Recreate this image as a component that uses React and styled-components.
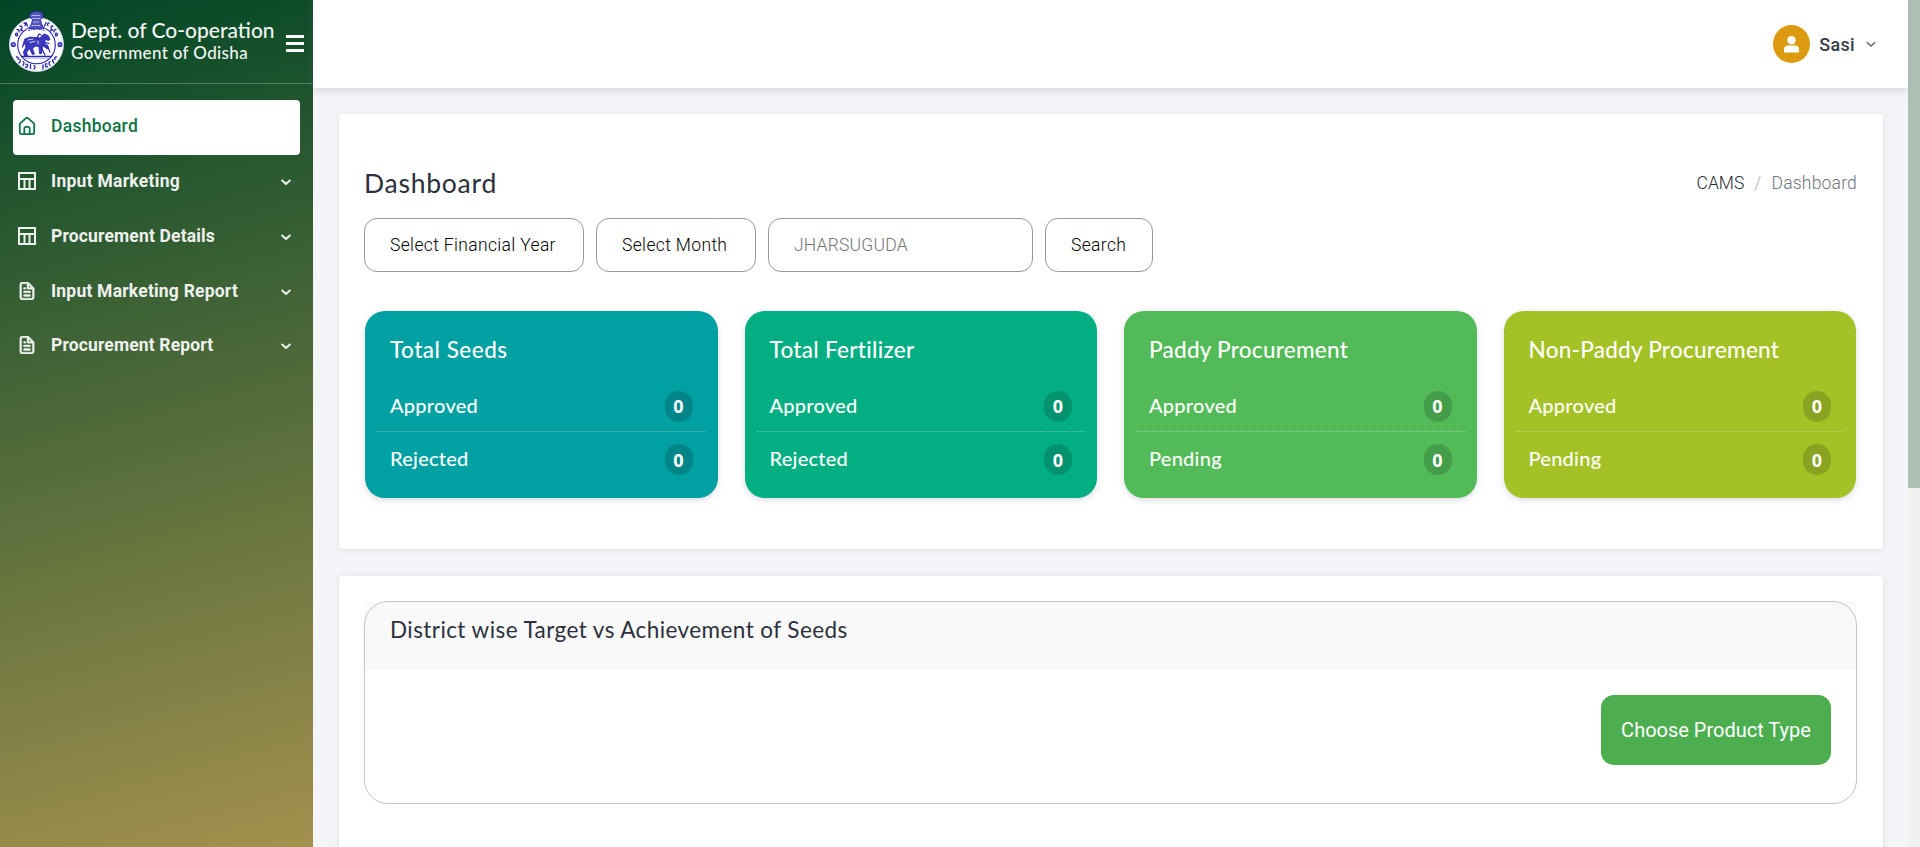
import React from "react";
import styled, { createGlobalStyle } from "styled-components";

const round = '"Lato", "Open Sans", sans-serif';
const plex = '"Roboto", "Noto Sans", sans-serif';

const Global = createGlobalStyle`
  * { box-sizing: border-box; }
  html, body { margin: 0; height: 100%; overflow: hidden; }
  body { background: #f4f5f8; font-family: ${plex}; }
  h1, h2, h3, p { margin: 0; font-weight: 400; }
  button, input { font: inherit; }
`;

const Page = styled.div`
  display: grid;
  grid-template-columns: 313px 1fr 12px;
  height: 847px;
  overflow: hidden;
`;

const Sidebar = styled.aside`
  background: linear-gradient(165deg, #004626 0%, #a9934f 100%);
  color: #eef2f7;
`;

const Brand = styled.header`
  display: flex;
  height: 84px;
  padding: 11px 9px 0;
  border-bottom: 1px solid rgba(255, 255, 255, 0.25);
`;

const BrandText = styled.div`
  flex: 1;
  margin-left: 7px;
  padding-top: 6px;
  font-family: ${round};
  font-weight: 500;
  color: #f2f6f3;
  white-space: nowrap;
`;

const BrandTitle = styled.div`
  font-size: 21px;
  line-height: 26px;
`;

const BrandSub = styled.div`
  font-size: 17px;
  line-height: 20px;
  letter-spacing: 0.35px;
`;

const Burger = styled.button`
  display: flex;
  flex-direction: column;
  gap: 4px;
  width: 18px;
  height: 17px;
  margin-top: 24px;
  padding: 0;
  border: 0;
  background: none;
  i { height: 3px; background: #fff; }
`;

const Nav = styled.nav`
  padding: 16px 13px 0;
`;

const NavItem = styled.a`
  display: flex;
  align-items: center;
  height: 54.75px;
  padding: 0 9px 2px 5px;
  border-radius: 4px;
  font-size: 17.5px;
  font-weight: ${(p) => (p.$active ? 500 : 700)};
  color: ${(p) => (p.$active ? "#0f7345" : "#eef1ee")};
  background: ${(p) => (p.$active ? "#fff" : "transparent")};
  letter-spacing: ${(p) => p.$track}px;
  svg:first-child { width: 18px; flex: none; }
  svg:last-child { margin-top: 3px; }
  span { flex: 1; margin-left: 15px; }
`;

const Main = styled.main`
  display: flex;
  flex-direction: column;
  min-width: 0;
`;

const Topbar = styled.header`
  display: flex;
  align-items: center;
  justify-content: flex-end;
  flex: none;
  height: 88px;
  padding-right: 32px;
  background: #fff;
  color: #5b6370;
  box-shadow: 0 2px 8px rgba(100, 110, 125, 0.25);
`;

const Avatar = styled.div`
  display: grid;
  place-items: center;
  width: 37px;
  height: 38px;
  border-radius: 50%;
  background: #dc9a10;
`;

const UserName = styled.span`
  margin: 0 11px 0 9px;
  font-size: 18px;
  font-weight: 500;
  letter-spacing: 0.3px;
  color: #383e46;
`;

const Content = styled.div`
  display: flex;
  flex-direction: column;
  gap: 27px;
  padding: 26px 25px 0 26px;
`;

const Panel = styled.section`
  flex: none;
  isolation: isolate;
  height: ${(p) => p.$h}px;
  border-radius: 4px;
  background: #fff;
  box-shadow: 0 1px 6px rgba(120, 130, 150, 0.22);
  padding: ${(p) => p.$top}px 26px 0 25px;
`;

const Heading = styled.div`
  display: flex;
  justify-content: space-between;
  align-items: center;
  height: 38px;
`;

const PageTitle = styled.h1`
  font: 400 26.5px ${round};
  color: #2b303b;
  letter-spacing: 0.75px;
`;

const Crumbs = styled.div`
  display: flex;
  gap: 10px;
  font-size: 17.5px;
  font-weight: 350;
  letter-spacing: 0.2px;
  color: #6c757d;
  b { font-weight: 350; letter-spacing: 0; color: #272c33; }
  i { font-style: normal; color: #adb5bd; }
`;

const Filters = styled.div`
  display: flex;
  gap: 12px;
  margin-top: 16px;
`;

const Pill = styled.button`
  width: ${(p) => p.$w}px;
  height: 54px;
  padding: 0 25px;
  border: 1px solid #999;
  border-radius: 13px;
  background: #fff;
  font-size: 17.5px;
  font-weight: 350;
  text-align: left;
  white-space: nowrap;
  color: ${(p) => (p.$muted ? "#757575" : "#000")};
  letter-spacing: ${(p) => (p.$muted ? 0.2 : 0.35)}px;
`;

const Stats = styled.div`
  display: grid;
  grid-template-columns: repeat(4, 1fr);
  gap: 27px;
  margin: 39px 1px 0;
`;

const Stat = styled.article`
  height: 187px;
  padding: 25px 12px 0;
  border-radius: 20px;
  background: ${(p) => p.$color};
  color: #fff;
  font-family: ${round};
  box-shadow: 0 2px 6px rgba(100, 110, 125, 0.25);
`;

const StatTitle = styled.h2`
  height: 42px;
  padding-left: 13px;
  font-size: 22.5px;
  font-weight: 500;
  line-height: 28px;
  letter-spacing: ${(p) => p.$track}px;
`;

const StatRow = styled.div`
  display: flex;
  justify-content: space-between;
  align-items: center;
  height: 53px;
  padding: 0 13px;
  font-size: 20px;
  font-weight: 500;
  letter-spacing: 0.25px;
  & + & { border-top: 1px dotted rgba(255, 255, 255, 0.35); }
`;

const Badge = styled.span`
  display: grid;
  place-items: center;
  width: 28px;
  height: 31px;
  margin-top: 3px;
  border-radius: 14px;
  background: rgba(0, 0, 0, 0.16);
  font: 700 18px "Open Sans", sans-serif;
  letter-spacing: 0;
`;

const ChartCard = styled.div`
  height: 203px;
  border: 1px solid #c4c4c4;
  border-radius: 24px;
`;

/* Sits beneath the card's rounded border so the outline stays visible. */
const ChartHead = styled.h2`
  position: relative;
  z-index: -1;
  height: 68px;
  padding: 13px 25px 0;
  border-radius: 3px 3px 0 0;
  background: #f9f9f9;
  font: 400 22.5px/30px ${round};
  letter-spacing: 0.42px;
  color: #2b303b;
`;

const ChartBody = styled.div`
  display: flex;
  justify-content: flex-end;
  padding: 25px;
`;

const ProductButton = styled.button`
  width: 230px;
  height: 70px;
  padding: 0;
  border: 0;
  border-radius: 13px;
  background: #4cae4f;
  color: #fff;
  font-size: 20px;
  white-space: nowrap;
`;

const ScrollTrack = styled.div`
  background: #f0f0f0;
`;

const ScrollThumb = styled.div`
  height: 488px;
  background: #abbfb5;
`;

function Seal() {
  return (
    <svg width="55" height="62" viewBox="0 0 55 62" fill="none" stroke="#2623b5" strokeLinecap="round" strokeLinejoin="round">
      <circle cx="27.5" cy="33.5" r="27" fill="#fff" stroke="#cfd5ef" />
      <circle cx="27.5" cy="34" r="18.800" strokeWidth="1.100" />
      <path d="M22 2q5.500-3.500 11 0l1.500 4-3 2.500 1 4 2.500 5H20l2.500-5 1-4-3-2.500z" fill="#5354c0" strokeWidth="0.800" />
      <path d="M23 4.500h9M24 7.500h7M25 11h5M23 14.500h9" stroke="#dfe1f7" strokeDasharray="1.200 1.800" />
      <path d="M19.500 19.500q8-2.500 16 0" strokeWidth="1" strokeDasharray="1 1.500" />
      <g strokeWidth="1.300">
        <path d="M6.500 23q2-2 2 .5t-2 .5M8 18.500q2.500 0 2 2.500M11 15q3 0 1.500 3M11.500 19l2 .5M15 12q2.500.5 1 2.500M17 11.500l1.500 3.500" />
        <path d="M48.500 23q-2-2-2 .5t2 .5M47 18.500q-2.500 0-2 2.500M44 15q-3 0-1.500 3M43.500 19l-2 .5M40 12q-2.500.5-1 2.500M37 11.500l-1.500 3.500" />
        <path d="M7.500 46q2.500 0 1.500 2.500M11 48.500q1 2-1 3.500M14 50.500q2 1 0 4M17 53.500q2-1 1.500 1.500t-2 1M21.500 53.500v4M25 54.500q2 1 0 3.500" />
        <path d="M47.500 46q-2.500 0-1.500 2.500M44 48.500q-1 2 1 3.500M41 50.500q-2 1 0 4M38 53q-2-1-1.500 1.500t2 1M34 54v4" />
      </g>
      <circle cx="4.300" cy="33.500" r="2" fill="#7f80d2" strokeWidth="1.100" />
      <circle cx="51" cy="33.500" r="2" fill="#7f80d2" strokeWidth="1.100" />
      <path d="M16 28q5-3 10-1.500l5 .5 4-4 4 1.500 2 4-2 1-2.500-1.500-1 4 4 4-1 2-5-3.500-1 8h-2l-.5-7-4-.5-2.500 3 2 5-2 .5-3-6-3 4 1 3-3 .5-1-4 2.500-5-1.500-4-2 4z" fill="#3b39bd" strokeWidth="0.900" />
      <path d="M28 27l2-4 2 1M34 31l6 1.500M38 34l3 7M32 36l4 8" strokeWidth="1.200" />
      <path d="M19 29l5-1M21 31.500l5-1M29 30v3" stroke="#dfe1f7" strokeWidth="0.900" />
      <path d="M12.500 45.500h30" strokeWidth="1.300" />
      <path d="M15 47.500h25" strokeWidth="0.600" stroke="#9c9cdd" />
    </svg>
  );
}

const HOME = "M20,8h0L14,2.74a3,3,0,0,0-4,0L4,8a3,3,0,0,0-1,2.26V19a3,3,0,0,0,3,3H18a3,3,0,0,0,3-3V10.25A3,3,0,0,0,20,8ZM14,20H10V15a1,1,0,0,1,1-1h2a1,1,0,0,1,1,1Zm5-1a1,1,0,0,1-1,1H16V15a3,3,0,0,0-3-3H11a3,3,0,0,0-3,3v5H6a1,1,0,0,1-1-1V10.25a1,1,0,0,1,.34-.75l6-5.25a1,1,0,0,1,1.32,0l6,5.25a1,1,0,0,1,.34.75Z";
const FILE = "M9,10h1a1,1,0,0,0,0-2H9a1,1,0,0,0,0,2Zm0,2a1,1,0,0,0,0,2h6a1,1,0,0,0,0-2ZM20,8.94a1.31,1.31,0,0,0-.06-.27l0-.09a1.07,1.07,0,0,0-.19-.28h0l-6-6h0a1.07,1.07,0,0,0-.28-.19l-.1,0A1.1,1.1,0,0,0,13.06,2H7A3,3,0,0,0,4,5V19a3,3,0,0,0,3,3H17a3,3,0,0,0,3-3V9S20,9,20,8.94ZM14,5.41,16.59,8H14ZM18,19a1,1,0,0,1-1,1H7a1,1,0,0,1-1-1V5A1,1,0,0,1,7,4h5V9a1,1,0,0,0,1,1h5Zm-3-3H9a1,1,0,0,0,0,2h6a1,1,0,0,0,0-2Z";

const GlyphIcon = ({ d, bold }) => (
  <svg width="18" height="18" viewBox="2 2 20 20" fill="currentColor" stroke="currentColor" strokeWidth={bold ? 0.5 : 0}><path d={d} /></svg>
);
const FileIcon = () => <GlyphIcon d={FILE} bold />;
const TableIcon = () => (
  <svg width="18" height="18" viewBox="0 0 18 18" fill="none" stroke="currentColor" strokeWidth="2">
    <path d="M1 1h16v16H1zM1 7h16M6.500 7v10M11.500 7v10" />
  </svg>
);
const Chevron = ({ w = 2 }) => (
  <svg width="10" height="7" viewBox="0 0 10 7" fill="none" stroke="currentColor" strokeWidth={w} strokeLinecap="round" strokeLinejoin="round">
    <path d="M1.200 1.500L5 5l3.800-3.500" />
  </svg>
);

const menu = [
  ["Input Marketing", TableIcon, 0.27],
  ["Procurement Details", TableIcon, 0.16],
  ["Input Marketing Report", FileIcon, 0.21],
  ["Procurement Report", FileIcon, 0.14],
];

const stats = [
  ["Total Seeds", "Rejected", "#01a0a2", 0.5],
  ["Total Fertilizer", "Rejected", "#03af82", 0.3],
  ["Paddy Procurement", "Pending", "#52bb58", 0.25],
  ["Non-Paddy Procurement", "Pending", "#a4c226", 0.25],
];

export default function App() {
  return (
    <>
      <Global />
      <Page>
        <Sidebar>
          <Brand>
            <Seal />
            <BrandText>
              <BrandTitle>Dept. of Co-operation</BrandTitle>
              <BrandSub>Government of Odisha</BrandSub>
            </BrandText>
            <Burger aria-label="Toggle menu"><i /><i /><i /></Burger>
          </Brand>
          <Nav>
            <NavItem $active $track={0.26}><GlyphIcon d={HOME} /><span>Dashboard</span></NavItem>
            {menu.map(([label, Icon, track]) => (
              <NavItem key={label} $track={track}><Icon /><span>{label}</span><Chevron /></NavItem>
            ))}
          </Nav>
        </Sidebar>
        <Main>
          <Topbar>
            <Avatar>
              <svg width="15" height="17" viewBox="0 0 15 17" fill="#fff"><circle cx="7.500" cy="4.200" r="4.200" /><path d="M0 16.500v-3q0-4 4-4h7q4 0 4 4v3z" /></svg>
            </Avatar>
            <UserName>Sasi</UserName>
            <Chevron w={1.5} />
          </Topbar>
          <Content>
            <Panel $h={435} $top={50}>
              <Heading>
                <PageTitle>Dashboard</PageTitle>
                <Crumbs><b>CAMS</b><i>/</i><span>Dashboard</span></Crumbs>
              </Heading>
              <Filters>
                <Pill $w={220}>Select Financial Year</Pill>
                <Pill $w={160}>Select Month</Pill>
                <Pill $w={265} $muted>JHARSUGUDA</Pill>
                <Pill $w={108}>Search</Pill>
              </Filters>
              <Stats>
                {stats.map(([title, second, color, track]) => (
                  <Stat key={title} $color={color}>
                    <StatTitle $track={track}>{title}</StatTitle>
                    <StatRow><span>Approved</span><Badge>0</Badge></StatRow>
                    <StatRow><span>{second}</span><Badge>0</Badge></StatRow>
                  </Stat>
                ))}
              </Stats>
            </Panel>
            <Panel $h={300} $top={25}>
              <ChartCard>
                <ChartHead>District wise Target vs Achievement of Seeds</ChartHead>
                <ChartBody>
                  <ProductButton>Choose Product Type</ProductButton>
                </ChartBody>
              </ChartCard>
            </Panel>
          </Content>
        </Main>
        <ScrollTrack><ScrollThumb /></ScrollTrack>
      </Page>
    </>
  );
}
